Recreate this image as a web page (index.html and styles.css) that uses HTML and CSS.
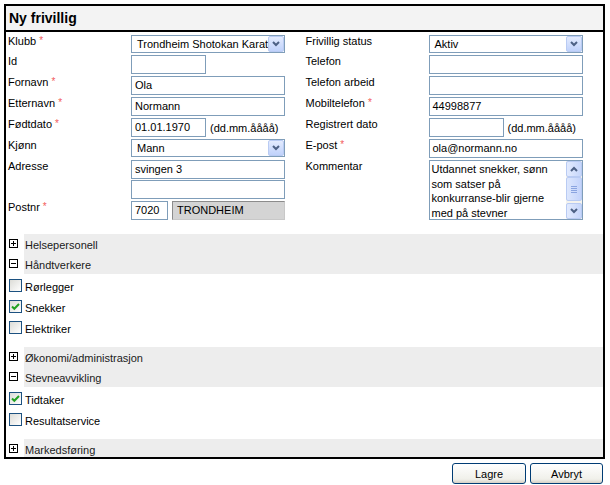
FILE: index.html
```html
<!DOCTYPE html>
<html lang="no">
<head>
<meta charset="utf-8">
<title>Ny frivillig</title>
<link rel="stylesheet" href="styles.css">
</head>
<body>
<div class="panel">
  <div class="panel-head"><h1>Ny frivillig</h1></div>
  <div class="form">
    <div class="col">
      <div class="row short"><div class="label">Klubb <span class="req">*</span></div><div class="field"><div class="select"><span class="sel-text">Trondheim Shotokan Karate</span><span class="sel-btn"><svg width="14" height="14" viewBox="0 0 14 14"><polyline points="4,5 7,8 10,5" fill="none" stroke="#4d6185" stroke-width="2"/></svg></span></div></div></div>
      <div class="row"><div class="label">Id</div><div class="field"><div class="input small"></div></div></div>
      <div class="row"><div class="label">Fornavn <span class="req">*</span></div><div class="field"><div class="input">Ola</div></div></div>
      <div class="row"><div class="label">Etternavn <span class="req">*</span></div><div class="field"><div class="input">Normann</div></div></div>
      <div class="row"><div class="label">Fødtdato <span class="req">*</span></div><div class="field"><div class="input small">01.01.1970</div><span class="hint">(dd.mm.åååå)</span></div></div>
      <div class="row"><div class="label">Kjønn</div><div class="field"><div class="select"><span class="sel-text">Mann</span><span class="sel-btn"><svg width="14" height="14" viewBox="0 0 14 14"><polyline points="4,5 7,8 10,5" fill="none" stroke="#4d6185" stroke-width="2"/></svg></span></div></div></div>
      <div class="row short"><div class="label">Adresse</div><div class="field"><div class="input">svingen 3</div></div></div>
      <div class="row"><div class="label"></div><div class="field"><div class="input"></div></div></div>
      <div class="row"><div class="label">Postnr <span class="req">*</span></div><div class="field"><div class="input zip">7020</div><div class="input city">TRONDHEIM</div></div></div>
    </div>
    <div class="col">
      <div class="row short"><div class="label">Frivillig status</div><div class="field"><div class="select"><span class="sel-text">Aktiv</span><span class="sel-btn"><svg width="14" height="14" viewBox="0 0 14 14"><polyline points="4,5 7,8 10,5" fill="none" stroke="#4d6185" stroke-width="2"/></svg></span></div></div></div>
      <div class="row"><div class="label">Telefon</div><div class="field"><div class="input"></div></div></div>
      <div class="row"><div class="label">Telefon arbeid</div><div class="field"><div class="input"></div></div></div>
      <div class="row"><div class="label">Mobiltelefon <span class="req">*</span></div><div class="field"><div class="input">44998877</div></div></div>
      <div class="row"><div class="label">Registrert dato</div><div class="field"><div class="input small"></div><span class="hint">(dd.mm.åååå)</span></div></div>
      <div class="row"><div class="label">E-post <span class="req">*</span></div><div class="field"><div class="input">ola@normann.no</div></div></div>
      <div class="row tall"><div class="label">Kommentar</div><div class="field"><div class="textarea"><div class="ta-text">Utdannet snekker, sønn<br>som satser på<br>konkurranse-blir gjerne<br>med på stevner</div><div class="scrollbar"><span class="sb-btn"><svg width="14" height="14" viewBox="0 0 14 14"><polyline points="4,9 7,6 10,9" fill="none" stroke="#4d6185" stroke-width="2"/></svg></span><span class="sb-thumb"><svg width="8" height="8" viewBox="0 0 8 8"><path d="M1 1.5H7M1 3.5H7M1 5.5H7M1 7.5H7" stroke="#8aa4e0" stroke-width="1"/></svg></span><span class="sb-track"></span><span class="sb-btn"><svg width="14" height="14" viewBox="0 0 14 14"><polyline points="4,5 7,8 10,5" fill="none" stroke="#4d6185" stroke-width="2"/></svg></span></div></div></div></div>
    </div>
  </div>

  <div class="sections">
    <div class="sec-head"><span class="tog"><svg width="9" height="9" viewBox="0 0 9 9"><rect x="0.5" y="0.5" width="8" height="8" fill="#fff" stroke="#000"/><path d="M2 4.5H7M4.5 2V7" stroke="#000"/></svg></span><span class="sec-title">Helsepersonell</span></div>
    <div class="sec-head"><span class="tog"><svg width="9" height="9" viewBox="0 0 9 9"><rect x="0.5" y="0.5" width="8" height="8" fill="#fff" stroke="#000"/><path d="M2 4.5H7" stroke="#000"/></svg></span><span class="sec-title">Håndtverkere</span></div>
    <div class="checks">
      <div class="check"><span class="cb"></span><span class="check-label">Rørlegger</span></div>
      <div class="check"><span class="cb"><svg width="11" height="11" viewBox="0 0 11 11"><path d="M2 5.5L4.3 7.8L9 3" fill="none" stroke="#21a121" stroke-width="2"/></svg></span><span class="check-label">Snekker</span></div>
      <div class="check"><span class="cb"></span><span class="check-label">Elektriker</span></div>
    </div>
    <div class="sec-head"><span class="tog"><svg width="9" height="9" viewBox="0 0 9 9"><rect x="0.5" y="0.5" width="8" height="8" fill="#fff" stroke="#000"/><path d="M2 4.5H7M4.5 2V7" stroke="#000"/></svg></span><span class="sec-title">Økonomi/administrasjon</span></div>
    <div class="sec-head"><span class="tog"><svg width="9" height="9" viewBox="0 0 9 9"><rect x="0.5" y="0.5" width="8" height="8" fill="#fff" stroke="#000"/><path d="M2 4.5H7" stroke="#000"/></svg></span><span class="sec-title">Stevneavvikling</span></div>
    <div class="checks">
      <div class="check"><span class="cb"><svg width="11" height="11" viewBox="0 0 11 11"><path d="M2 5.5L4.3 7.8L9 3" fill="none" stroke="#21a121" stroke-width="2"/></svg></span><span class="check-label">Tidtaker</span></div>
      <div class="check"><span class="cb"></span><span class="check-label">Resultatservice</span></div>
    </div>
    <div class="sec-head last"><span class="tog"><svg width="9" height="9" viewBox="0 0 9 9"><rect x="0.5" y="0.5" width="8" height="8" fill="#fff" stroke="#000"/><path d="M2 4.5H7M4.5 2V7" stroke="#000"/></svg></span><span class="sec-title">Markedsføring</span></div>
  </div>
</div>
<div class="actions">
  <button class="btn save">Lagre</button>
  <button class="btn cancel">Avbryt</button>
</div>
</body>
</html>
```
FILE: styles.css
```css
* { box-sizing: border-box; }
body {
  margin: 0;
  font-family: "Liberation Sans", Arial, sans-serif;
  font-size: 11px;
  color: #000;
  background: #fff;
}
.panel {
  margin: 4px 0 0 4px;
  width: 601px;
  border: 2px solid #000;
}
.panel-head {
  height: 26px;
  background: #f3f3f3;
  border-bottom: 2px solid #000;
  padding-left: 3px;
}
.panel-head h1 {
  margin: 0;
  font-size: 14px;
  line-height: 24px;
  font-weight: bold;
}
.form {
  display: flex;
  padding: 1px 0 0 2px;
}
.col { width: 299px; }
.row {
  display: grid;
  grid-template-columns: 123px 1fr;
  height: 21px;
}
.row.short { height: 20px; }
.row.tall { height: 62px; }
.label {
  padding-top: 1px;
  line-height: 14px;
  white-space: nowrap;
}
.req {
  color: #f25c5c;
  font-size: 10px;
  vertical-align: 1px;
}
.field {
  padding-top: 2px;
  display: flex;
  align-items: flex-start;
}
.input {
  width: 154px;
  height: 19px;
  border: 1px solid #7f9db9;
  padding: 0 3px;
  line-height: 17px;
  white-space: nowrap;
  overflow: hidden;
  background: #fff;
}
.input.small { width: 75px; }
.input.zip { width: 37px; }
.input.city {
  width: 113px;
  margin-left: 4px;
  background: #d4d4d4;
  border-color: #8c8c8c #c8c8c8 #c8c8c8 #8c8c8c;
  padding-left: 4px;
}
.hint {
  margin-left: 4px;
  padding-top: 4px;
  white-space: nowrap;
}
.select {
  width: 154px;
  height: 18px;
  border: 1px solid #7f9db9;
  display: flex;
  background: #fff;
}
.sel-text {
  flex: 1;
  padding-left: 5px;
  line-height: 17px;
  white-space: nowrap;
  overflow: hidden;
}
.sel-btn {
  width: 16px;
  height: 16px;
  border: 1px solid #b9cbf3;
  border-radius: 2px;
  background: linear-gradient(#e3ebfe, #c0d2fb);
  display: flex;
  align-items: center;
  justify-content: center;
}
.textarea {
  width: 154px;
  height: 60px;
  border: 1px solid #7f9db9;
  display: flex;
}
.ta-text {
  flex: 1;
  padding: 1px 2px 0 2px;
  line-height: 14.5px;
  white-space: nowrap;
  overflow: hidden;
}
.scrollbar {
  width: 16px;
  display: flex;
  flex-direction: column;
  background: #f4f3ee;
}
.sb-btn {
  height: 16px;
  border: 1px solid #b9cbf3;
  border-radius: 2px;
  background: linear-gradient(90deg, #e3ebfe, #c6d6fb);
  display: flex;
  align-items: center;
  justify-content: center;
}
.sb-thumb {
  height: 24px;
  border: 1px solid #b9cbf3;
  border-radius: 2px;
  background: linear-gradient(90deg, #dde7fd, #c3d3fb);
  display: flex;
  align-items: center;
  justify-content: center;
}
.sb-track { flex: 1; }
.sections { margin-top: 14px; }
.sec-head {
  display: flex;
  height: 20px;
}
.sec-head.last { height: 18px; }
.tog {
  width: 18px;
  padding: 5px 0 0 3px;
  background: #fff;
}
.tog svg { display: block; }
.sec-title {
  flex: 1;
  background: #ededed;
  padding: 2px 0 0 1px;
  line-height: 18px;
  color: #1a1a1a;
}
.checks {
  padding-top: 2px;
  margin-bottom: 8px;
}
.check {
  display: flex;
  height: 21px;
  align-items: flex-start;
}
.cb {
  width: 13px;
  height: 13px;
  margin: 3px 3px 0 3px;
  border: 1px solid #1c5180;
  background: linear-gradient(135deg, #dcdcd7, #fff);
}
.cb svg { display: block; }
.check-label {
  padding-top: 1px;
  line-height: 20px;
}
.actions {
  display: flex;
  justify-content: flex-end;
  gap: 4px;
  margin-top: 4px;
  padding-right: 7px;
}
.btn {
  height: 21px;
  border: 1px solid #003c74;
  border-radius: 3px;
  background: linear-gradient(#ffffff, #f0f0ea 80%, #d6d0c5);
  font-family: "Liberation Sans", Arial, sans-serif;
  font-size: 11px;
  color: #000;
  padding: 1px 0 0;
}
.btn.save { width: 74px; }
.btn.cancel { width: 73px; }
```
